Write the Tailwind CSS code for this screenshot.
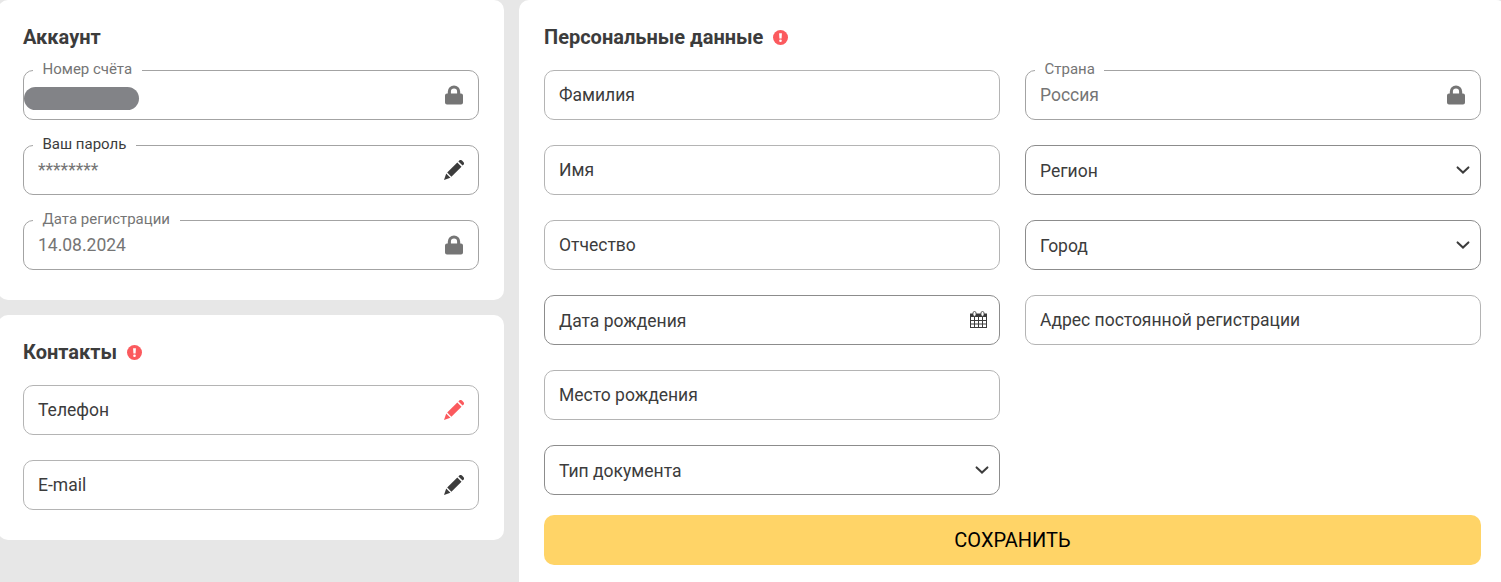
<!DOCTYPE html>
<html lang="ru">
<head>
    <meta charset="UTF-8">
    <title>Личный кабинет</title>
    <script src="https://cdn.jsdelivr.net/npm/@tailwindcss/browser@4"></script>
</head>
<body class="bg-[#e7e7e7] h-screen overflow-hidden font-['Roboto','Liberation_Sans',sans-serif] text-[17.5px] text-[#3c3c3c]">
    <!-- Icons -->
    <svg class="hidden">
        <symbol id="lock" viewBox="0 0 18 19">
            <path fill-rule="evenodd" d="M2.8 8V6.2a6.2 6.2 0 0 1 12.4 0V8H16a2 2 0 0 1 2 2v7a2 2 0 0 1-2 2H2a2 2 0 0 1-2-2v-7a2 2 0 0 1 2-2zM5.9 8h6.2V6.2a3.1 3.1 0 0 0-6.2 0z"/>
        </symbol>
        <symbol id="pencil" viewBox="0 0 20 20">
            <path d="M14.4 1.4l.8-.8a2 2 0 0 1 2.8 0l1.4 1.4a2 2 0 0 1 0 2.8l-.8.8zM13.3 2.5l4.2 4.2L7.4 16.8 3.2 12.6zM2.2 13.6l4.2 4.2L0 20z"/>
        </symbol>
        <symbol id="chevron" viewBox="0 0 14 8">
            <path d="M1.6 1.4L7 6.5l5.4-5.1" fill="none" stroke="currentColor" stroke-width="2" stroke-linecap="round"/>
        </symbol>
        <symbol id="alert" viewBox="0 0 15 15">
            <circle cx="7.5" cy="7.5" r="7.5" fill="#fb5a5e"/>
            <path d="M6.1 3.2h2.8L8.6 8.6H6.4z" fill="#fff"/>
            <circle cx="7.5" cy="10.8" r="1.3" fill="#fff"/>
        </symbol>
        <symbol id="calendar" viewBox="0 0 17 17">
            <path d="M0 2.5h17V17H0z"/>
            <path fill="#fff" d="M1 6h3v3H1zM5 6h3v3H5zM9 6h3v3H9zM13 6h3v3h-3zM1 10h3v2.5H1zM5 10h3v2.5H5zM9 10h3v2.5H9zM13 10h3v2.5h-3zM1 13.4h3V16H1zM5 13.4h3V16H5zM9 13.4h3V16H9zM13 13.4h3V16h-3z"/>
            <rect x="3" y=".5" width="3" height="4.8" rx="1.5" fill="#fff" stroke="currentColor" stroke-width=".8"/>
            <rect x="11" y=".5" width="3" height="4.8" rx="1.5" fill="#fff" stroke="currentColor" stroke-width=".8"/>
        </symbol>
    </svg>

    <div class="flex gap-[15px] w-[1508px] h-full -ml-0.5">
        <!-- Left column -->
        <div class="flex flex-col gap-[15px] w-[506px]">
            <div class="bg-white rounded-[10px] h-[300px] px-[25px] pt-[25px]">
                <h2 class="text-[20px] leading-6 font-bold mb-[21px]">Аккаунт</h2>
                <div class="flex flex-col gap-[25px]">
                    <div class="relative flex items-center justify-between h-[50px] border border-[#a3a3a3] rounded-[10px] pr-[15px] text-[#757575]">
                        <span class="absolute -top-3 left-[9px] bg-white px-[9.5px] text-[15px] leading-5">Номер счёта</span>
                        <span class="w-[115px] h-[23px] mt-1.5 rounded-full bg-[#828387]"></span>
                        <svg class="w-[18px] h-5 fill-current"><use href="#lock"/></svg>
                    </div>
                    <div class="relative flex items-center justify-between h-[50px] border border-[#a3a3a3] rounded-[10px] pl-3.5 pr-3.5">
                        <span class="absolute -top-3 left-[9px] bg-white px-[9.5px] text-[15px] leading-5">Ваш пароль</span>
                        <span class="leading-6 text-[#757575]">********</span>
                        <svg class="w-5 h-5 fill-current"><use href="#pencil"/></svg>
                    </div>
                    <div class="relative flex items-center justify-between h-[50px] border border-[#a3a3a3] rounded-[10px] pl-3.5 pr-[15px] text-[#757575]">
                        <span class="absolute -top-3 left-[9px] bg-white px-[9.5px] text-[15px] leading-5">Дата регистрации</span>
                        <span>14.08.2024</span>
                        <svg class="w-[18px] h-5 fill-current"><use href="#lock"/></svg>
                    </div>
                </div>
            </div>

            <div class="bg-white rounded-[10px] h-[225px] px-[25px] pt-[25px]">
                <h2 class="flex items-center gap-2.5 text-[20px] leading-6 font-bold mb-[21px]">Контакты
                    <svg class="w-[15px] h-[15px]"><use href="#alert"/></svg>
                </h2>
                <div class="flex flex-col gap-[25px]">
                    <div class="flex items-center justify-between h-[50px] border border-[#b4b4b4] rounded-[10px] pl-3.5 pr-3.5">
                        <span>Телефон</span>
                        <svg class="w-5 h-5 fill-[#fb5a5e]"><use href="#pencil"/></svg>
                    </div>
                    <div class="flex items-center justify-between h-[50px] border border-[#b4b4b4] rounded-[10px] pl-3.5 pr-3.5">
                        <span>E-mail</span>
                        <svg class="w-5 h-5 fill-current"><use href="#pencil"/></svg>
                    </div>
                </div>
            </div>
        </div>

        <!-- Personal data -->
        <div class="flex-1 bg-white rounded-t-[10px] px-[25px] pt-[25px]">
            <h2 class="flex items-center gap-2.5 text-[20px] leading-6 font-bold mb-[21px]">Персональные данные
                <svg class="w-[15px] h-[15px]"><use href="#alert"/></svg>
            </h2>
            <div class="grid grid-cols-2 gap-[25px]">
                <div class="flex flex-col gap-[25px]">
                    <div class="flex items-center h-[50px] border border-[#b4b4b4] rounded-[10px] px-3.5">Фамилия</div>
                    <div class="flex items-center h-[50px] border border-[#b4b4b4] rounded-[10px] px-3.5">Имя</div>
                    <div class="flex items-center h-[50px] border border-[#b4b4b4] rounded-[10px] px-3.5">Отчество</div>
                    <div class="flex items-center justify-between h-[50px] border border-[#8c8c8c] rounded-[10px] pl-3.5 pr-3">
                        <span class="pt-0.5">Дата рождения</span>
                        <svg class="w-[17px] h-[17px] mb-0.5 fill-current"><use href="#calendar"/></svg>
                    </div>
                    <div class="flex items-center h-[50px] border border-[#b4b4b4] rounded-[10px] px-3.5">Место рождения</div>
                    <div class="flex items-center justify-between h-[50px] border border-[#8c8c8c] rounded-[10px] pl-3.5 pr-2.5">
                        <span class="pt-0.5">Тип документа</span>
                        <svg class="w-3.5 h-2"><use href="#chevron"/></svg>
                    </div>
                </div>
                <div class="flex flex-col gap-[25px]">
                    <div class="relative flex items-center justify-between h-[50px] border border-[#a3a3a3] rounded-[10px] pl-3.5 pr-[15px] text-[#757575]">
                        <span class="absolute -top-3 left-[9px] bg-white px-[9.5px] text-[15px] leading-5">Страна</span>
                        <span>Россия</span>
                        <svg class="w-[18px] h-5 fill-current"><use href="#lock"/></svg>
                    </div>
                    <div class="flex items-center justify-between h-[50px] border border-[#8c8c8c] rounded-[10px] pl-3.5 pr-2.5">
                        <span class="pt-0.5">Регион</span>
                        <svg class="w-3.5 h-2"><use href="#chevron"/></svg>
                    </div>
                    <div class="flex items-center justify-between h-[50px] border border-[#8c8c8c] rounded-[10px] pl-3.5 pr-2.5">
                        <span class="pt-0.5">Город</span>
                        <svg class="w-3.5 h-2"><use href="#chevron"/></svg>
                    </div>
                    <div class="flex items-center h-[50px] border border-[#b4b4b4] rounded-[10px] px-3.5">Адрес постоянной регистрации</div>
                </div>
            </div>
            <button class="w-full h-[50px] mt-5 rounded-[10px] bg-[#ffd467] text-black text-[20px]">СОХРАНИТЬ</button>
        </div>
    </div>
</body>
</html>
